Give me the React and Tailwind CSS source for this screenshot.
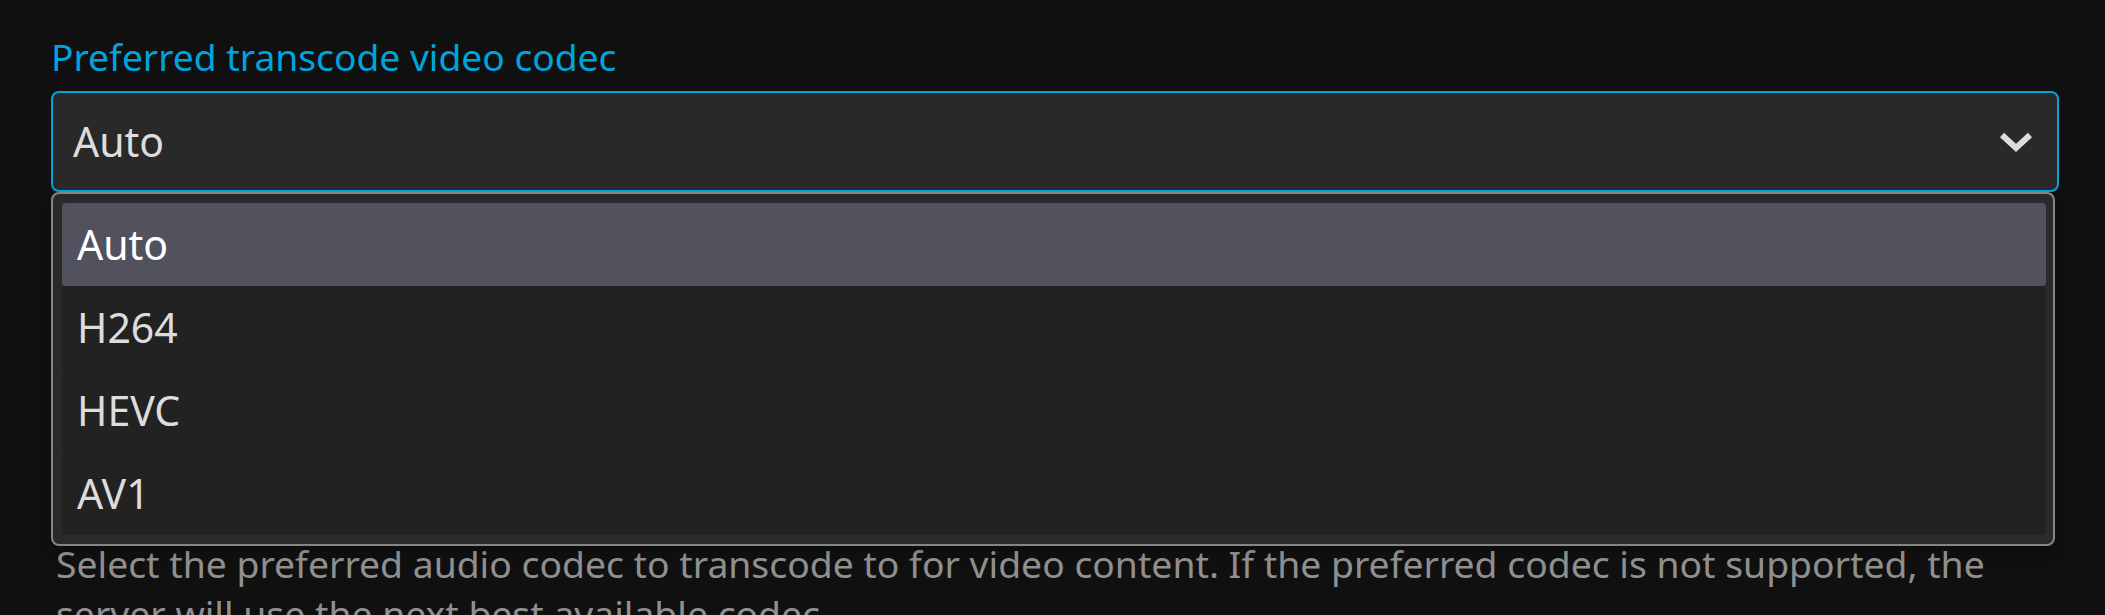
import React, { useState } from 'react';

const codecs = ['Auto', 'H264', 'HEVC', 'AV1'];

function Chevron() {
  return (
    <svg width="34" height="24" viewBox="0 0 34 24" className="shrink-0">
      <polyline
        points="3,5 17,18 31,5"
        fill="none"
        stroke="#dddddd"
        strokeWidth="6"
        strokeLinecap="butt"
        strokeLinejoin="miter"
      />
    </svg>
  );
}

export default function App() {
  const [selected, setSelected] = useState('Auto');
  const [hovered, setHovered] = useState('Auto');

  return (
    <div className="min-h-[615px] w-full bg-[#101010] pl-[51px] pr-[46px] font-['Noto_Sans',sans-serif] overflow-hidden">
      {/* Video codec field */}
      <div className="relative pt-[32px]">
        <label className="block text-[37.2px] leading-[50px] text-[#00a4dc]">
          Preferred transcode video codec
        </label>
        <div className="mt-[9px] h-[101px] flex items-center justify-between rounded-[8px] border-2 border-[#00a4dc] bg-[#292929] pl-[20px] pr-[24px]">
          <span className="text-[41px] leading-none text-[#dddddd]">{selected}</span>
          <Chevron />
        </div>

        {/* Open dropdown menu */}
        <div className="absolute left-0 right-[4px] top-[192px] z-10 rounded-[8px] border-2 border-[#858585] bg-[#2a2a2a] p-[9px] pr-[7px] shadow-lg">
          {codecs.map((codec) => (
            <div
              key={codec}
              onMouseEnter={() => setHovered(codec)}
              onClick={() => setSelected(codec)}
              className={`h-[83px] flex items-center rounded-[4px] pl-[15px] text-[41px] leading-none ${
                hovered === codec ? 'bg-[#52525e] text-white' : 'bg-[#222222] text-[#dddddd]'
              }`}
            >
              {codec}
            </div>
          ))}
        </div>
      </div>

      {/* Audio codec field (mostly under the menu) */}
      <div className="mt-[347px] pl-[5px] pr-[24px]">
        <p className="text-[37.3px] leading-[50px] text-[#909090]">
          Select the preferred audio codec to transcode to for video content. If the preferred codec is not supported, the server will use the next best available codec.
        </p>
      </div>
    </div>
  );
}
